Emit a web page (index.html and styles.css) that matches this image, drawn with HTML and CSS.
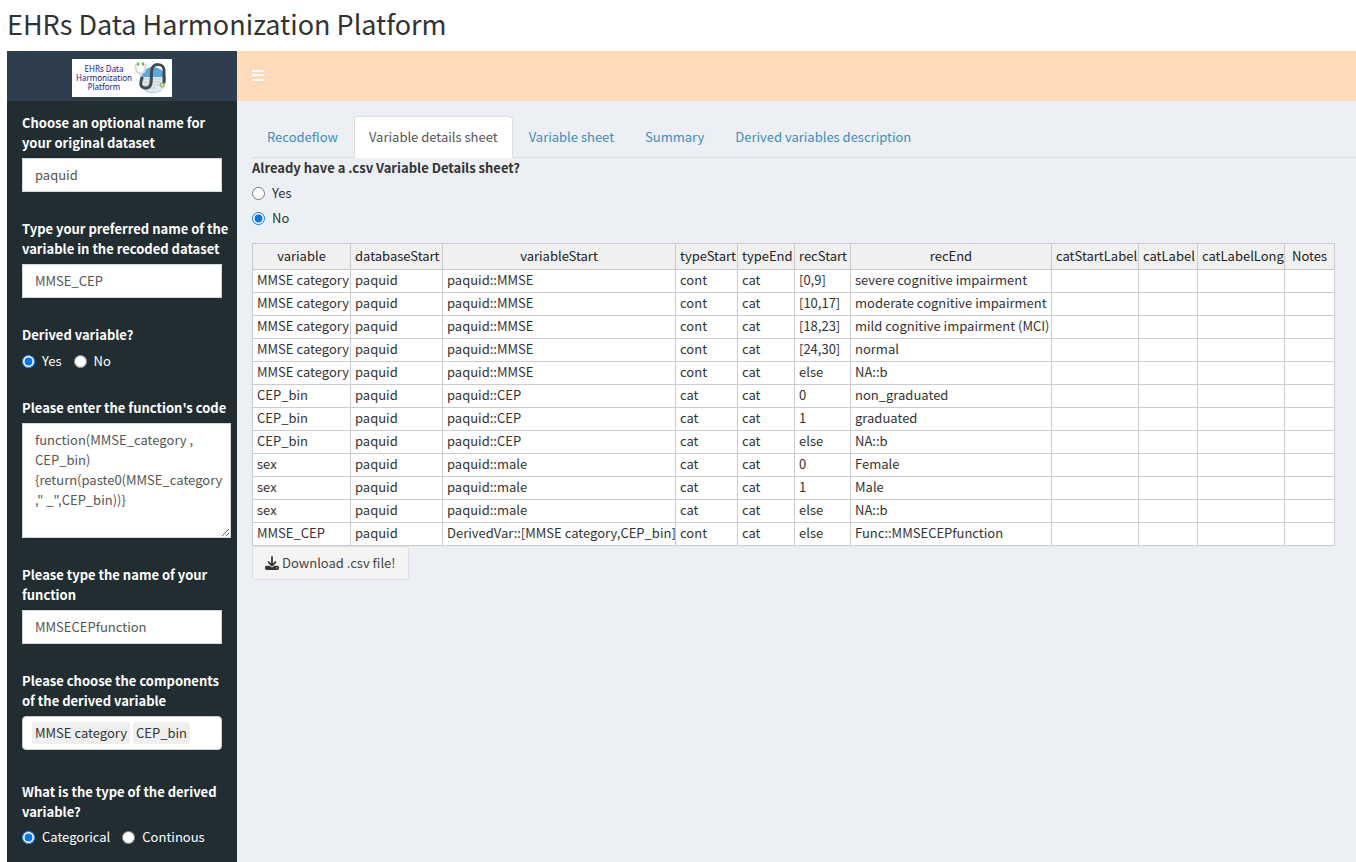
FILE: index.html
```
<!DOCTYPE html>
<html lang="en">
<head>
    <meta charset="UTF-8">
    <meta name="viewport" content="width=device-width, initial-scale=1.0">
    <title>EHRs Data Harmonization Platform</title>
    <link rel="stylesheet" href="styles.css">
</head>
<body>
    <h1>EHRs Data Harmonization Platform</h1>
    <div class="wrapper">
        <aside class="sidebar">
            <div class="logo">
                <div class="logo-card">
                    <span>EHRs Data<br>Harmonization<br>Platform</span>
                    <svg width="34" height="34" viewBox="0 0 34 34" fill="none" aria-hidden="true">
                        <circle cx="19" cy="19" r="13" fill="#5aaae0"/>
                        <path d="M8 16h22l2 5a13 13 0 0 1-25 2z" fill="#e4e9ec"/>
                        <path d="M9 18h18M9 21h18M10 24h15M12 27h10" stroke="#c3cbd0"/>
                        <path d="M4 3c-3 0-3 2-2 5 1 6 8 6 9 0 1-3 1-5-2-5M7 12c0 4 1 5 2 6" stroke="#d5dadd" stroke-width="2"/>
                        <path d="M8 17c-3 8 0 10 4 10 8 0 4-12 6-19 1-6 12-6 12 1v12" stroke="#424a51" stroke-width="3" stroke-linecap="round"/>
                        <path d="M3 3h2M8 3h2" stroke="#5dbb4b" stroke-width="3"/>
                        <circle cx="28" cy="24" r="2" fill="#dbe8d0" stroke="#74a25c"/>
                    </svg>
                </div>
            </div>
            <form class="sidebar-form">
                <div class="form-group">
                    <label class="title" for="dataset">Choose an optional name for your original dataset</label>
                    <input class="form-control" type="text" id="dataset" value="paquid">
                </div>
                <div class="form-group">
                    <label class="title" for="varname">Type your preferred name of the variable in the recoded dataset</label>
                    <input class="form-control" type="text" id="varname" value="MMSE_CEP">
                </div>
                <div class="form-group" role="radiogroup" aria-labelledby="derived-label">
                    <span class="title" id="derived-label">Derived variable?</span>
                    <div class="radio-inline">
                        <label><input type="radio" name="derived" checked>Yes</label>
                        <label><input type="radio" name="derived">No</label>
                    </div>
                </div>
                <div class="form-group">
                    <label class="title" for="code">Please enter the function's code</label>
                    <textarea class="form-control" id="code" spellcheck="false">function(MMSE_category ,
CEP_bin)
{return(paste0(MMSE_category
," _",CEP_bin))}</textarea>
                </div>
                <div class="form-group">
                    <label class="title" for="funcname">Please type the name of your function</label>
                    <input class="form-control" type="text" id="funcname" value="MMSECEPfunction">
                </div>
                <div class="form-group components">
                    <label class="title" for="components">Please choose the components of the derived variable</label>
                    <div class="selectize">
                        <span class="item">MMSE category</span>
                        <span class="item">CEP_bin</span>
                        <input type="text" id="components">
                    </div>
                </div>
                <div class="form-group" role="radiogroup" aria-labelledby="type-label">
                    <span class="title" id="type-label">What is the type of the derived variable?</span>
                    <div class="radio-inline">
                        <label><input type="radio" name="vartype" checked>Categorical</label>
                        <label><input type="radio" name="vartype">Continous</label>
                    </div>
                </div>
            </form>
        </aside>
        <div class="main">
            <header class="navbar">
                <button type="button" class="toggle" aria-label="Toggle navigation">
                    <svg width="12" height="12" viewBox="0 0 12 12" aria-hidden="true">
                        <path d="M0 1h12M0 5h12M0 10h12" stroke="#fff" stroke-width="2"/>
                    </svg>
                </button>
            </header>
            <section class="content">
                <nav class="tabs">
                    <a href="#">Recodeflow</a>
                    <a href="#" class="active">Variable details sheet</a>
                    <a href="#">Variable sheet</a>
                    <a href="#">Summary</a>
                    <a href="#">Derived variables description</a>
                </nav>
                <div class="radio-list" role="radiogroup" aria-labelledby="csv-label">
                    <span class="title" id="csv-label">Already have a .csv Variable Details sheet?</span>
                    <label><input type="radio" name="csv">Yes</label>
                    <label><input type="radio" name="csv" checked>No</label>
                </div>
                <table>
                    <colgroup>
                        <col class="c-variable"><col class="c-database"><col class="c-start">
                        <col class="c-typestart"><col class="c-typeend"><col class="c-recstart">
                        <col class="c-recend"><col class="c-label"><col class="c-catlabel">
                        <col class="c-label"><col class="c-notes">
                    </colgroup>
                    <thead>
                        <tr><th>variable</th><th>databaseStart</th><th>variableStart</th><th>typeStart</th><th>typeEnd</th><th>recStart</th><th>recEnd</th><th>catStartLabel</th><th>catLabel</th><th>catLabelLong</th><th>Notes</th></tr>
                    </thead>
                    <tbody>
                        <tr><td>MMSE category</td><td>paquid</td><td>paquid::MMSE</td><td>cont</td><td>cat</td><td>[0,9]</td><td>severe cognitive impairment</td><td></td><td></td><td></td><td></td></tr>
                        <tr><td>MMSE category</td><td>paquid</td><td>paquid::MMSE</td><td>cont</td><td>cat</td><td>[10,17]</td><td>moderate cognitive impairment</td><td></td><td></td><td></td><td></td></tr>
                        <tr><td>MMSE category</td><td>paquid</td><td>paquid::MMSE</td><td>cont</td><td>cat</td><td>[18,23]</td><td>mild cognitive impairment (MCI)</td><td></td><td></td><td></td><td></td></tr>
                        <tr><td>MMSE category</td><td>paquid</td><td>paquid::MMSE</td><td>cont</td><td>cat</td><td>[24,30]</td><td>normal</td><td></td><td></td><td></td><td></td></tr>
                        <tr><td>MMSE category</td><td>paquid</td><td>paquid::MMSE</td><td>cont</td><td>cat</td><td>else</td><td>NA::b</td><td></td><td></td><td></td><td></td></tr>
                        <tr><td>CEP_bin</td><td>paquid</td><td>paquid::CEP</td><td>cat</td><td>cat</td><td>0</td><td>non_graduated</td><td></td><td></td><td></td><td></td></tr>
                        <tr><td>CEP_bin</td><td>paquid</td><td>paquid::CEP</td><td>cat</td><td>cat</td><td>1</td><td>graduated</td><td></td><td></td><td></td><td></td></tr>
                        <tr><td>CEP_bin</td><td>paquid</td><td>paquid::CEP</td><td>cat</td><td>cat</td><td>else</td><td>NA::b</td><td></td><td></td><td></td><td></td></tr>
                        <tr><td>sex</td><td>paquid</td><td>paquid::male</td><td>cat</td><td>cat</td><td>0</td><td>Female</td><td></td><td></td><td></td><td></td></tr>
                        <tr><td>sex</td><td>paquid</td><td>paquid::male</td><td>cat</td><td>cat</td><td>1</td><td>Male</td><td></td><td></td><td></td><td></td></tr>
                        <tr><td>sex</td><td>paquid</td><td>paquid::male</td><td>cat</td><td>cat</td><td>else</td><td>NA::b</td><td></td><td></td><td></td><td></td></tr>
                        <tr><td>MMSE_CEP</td><td>paquid</td><td>DerivedVar::[MMSE category,CEP_bin]</td><td>cont</td><td>cat</td><td>else</td><td>Func::MMSECEPfunction</td><td></td><td></td><td></td><td></td></tr>
                    </tbody>
                </table>
                <button type="button" class="download">
                    <svg width="14" height="14" viewBox="0 0 512 512" fill="#333" aria-hidden="true">
                        <path d="M288 32c0-18-14-32-32-32s-32 14-32 32v243l-73-74c-13-12-33-12-46 0-12 13-12 33 0 46l128 128c13 12 33 12 46 0l128-128c12-13 12-33 0-46-13-12-33-12-46 0l-73 74V32zM64 352c-35 0-64 29-64 64v32c0 35 29 64 64 64h384c35 0 64-29 64-64v-32c0-35-29-64-64-64H347l-46 45c-25 25-65 25-90 0l-46-45H64zm368 56a24 24 0 1 1 0 48 24 24 0 1 1 0-48z"/>
                    </svg>
                    Download .csv file!
                </button>
            </section>
        </div>
    </div>
</body>
</html>
```
FILE: styles.css
```
* {
    box-sizing: border-box;
}
body {
    margin: 0;
    padding-left: 7px;
    min-height: 100vh;
    display: flex;
    flex-direction: column;
    font-family: "Noto Sans CJK JP", "Noto Sans", sans-serif;
    font-size: 13px;
    line-height: 20px;
    color: #333;
    background: #fff;
}
h1 {
    margin: 0;
    padding: 7px 0 11px;
    font-size: 27px;
    font-weight: 400;
    line-height: 33px;
}
input, textarea, button {
    font: inherit;
}
.wrapper {
    flex: 1;
    display: flex;
}
.sidebar {
    flex: none;
    width: 230px;
    background: #222d32;
    color: #fff;
}
.logo {
    height: 50px;
    display: flex;
    align-items: center;
    justify-content: center;
    padding-top: 3px;
    background: #2f3e4e;
}
.logo-card {
    display: flex;
    align-items: center;
    justify-content: space-between;
    width: 100px;
    height: 38px;
    padding: 0 4px;
    background: #fff;
    color: #1a1a8c;
    font-family: "Noto Sans", sans-serif;
    font-size: 8px;
    line-height: 9px;
    text-align: center;
}
.logo-card svg {
    flex: none;
}
.form-group {
    padding: 12px 15px 0;
    margin-bottom: 15px;
}
.components {
    margin-bottom: 20px;
}
.title {
    display: block;
    margin-bottom: 5px;
    font-weight: 700;
}
.form-group .title {
    margin-right: -8px;
}
.form-control {
    display: block;
    width: 100%;
    height: 34px;
    padding: 5px 12px 7px;
    border: 1px solid #d2d6de;
    border-radius: 0;
    background: #fff;
    color: #555;
}
textarea.form-control {
    width: 209px;
    height: 115px;
    padding: 6px 4px 6px 12px;
    overflow: hidden;
    resize: both;
}
input[type="radio"] {
    width: 13px;
    height: 13px;
    margin: 0 7px 0 0;
}
.radio-inline {
    display: flex;
    gap: 12px;
    padding-top: 1px;
}
.radio-inline label,
.radio-list label {
    display: flex;
    align-items: center;
}
.components + .form-group .radio-inline {
    padding-top: 0;
}
.selectize {
    display: flex;
    align-items: center;
    gap: 3px;
    height: 34px;
    padding: 0 9px;
    border: 1px solid #ccc;
    border-radius: 4px;
    background: #fff;
}
.selectize .item {
    padding: 1px 3px;
    border-radius: 3px;
    background: #efefef;
    color: #333;
    white-space: nowrap;
}
.selectize input {
    flex: 1;
    min-width: 0;
    padding: 0;
    border: 0;
    outline: 0;
}
.main {
    flex: 1;
    min-width: 0;
    background: #ecf0f5;
}
.navbar {
    height: 50px;
    display: flex;
    align-items: center;
    background: #ffdab9;
}
.toggle {
    display: flex;
    padding: 15px;
    border: 0;
    background: transparent;
    cursor: pointer;
}
.content {
    padding: 15px 0 15px 15px;
}
.tabs {
    display: flex;
    gap: 1px;
    border-bottom: 1px solid #ddd;
}
.tabs a {
    padding: 10px 14px;
    margin-bottom: -1px;
    border: 1px solid transparent;
    border-radius: 4px 4px 0 0;
    color: #3c8dbc;
    text-decoration: none;
    white-space: nowrap;
}
.tabs .active {
    border-color: #ddd #ddd #fff;
    background: #fff;
    color: #555;
}
.radio-list {
    display: flex;
    flex-direction: column;
    gap: 5px;
    margin-bottom: 15px;
}
.radio-list .title {
    margin-bottom: 0;
}
table {
    width: 1082px;
    table-layout: fixed;
    border-collapse: collapse;
    background: #fff;
}
th, td {
    height: 23px;
    padding: 0 4px 2px;
    border: 1px solid #ccc;
    text-align: left;
    white-space: nowrap;
}
th {
    height: 26px;
    background: #f0f0f0;
    color: #222;
    font-weight: 400;
    text-align: center;
}
.c-variable { width: 98px; }
.c-database { width: 92px; }
.c-start { width: 233px; }
.c-typestart { width: 62px; }
.c-typeend { width: 57px; }
.c-recstart { width: 56px; }
.c-recend { width: 201px; }
.c-label { width: 87px; }
.c-catlabel { width: 59px; }
.c-notes { width: 50px; }
.download {
    display: flex;
    align-items: center;
    gap: 3px;
    height: 34px;
    padding: 0 12px;
    border: 1px solid #ddd;
    border-radius: 3px;
    background: #f4f4f4;
    color: #444;
    cursor: pointer;
}
```
